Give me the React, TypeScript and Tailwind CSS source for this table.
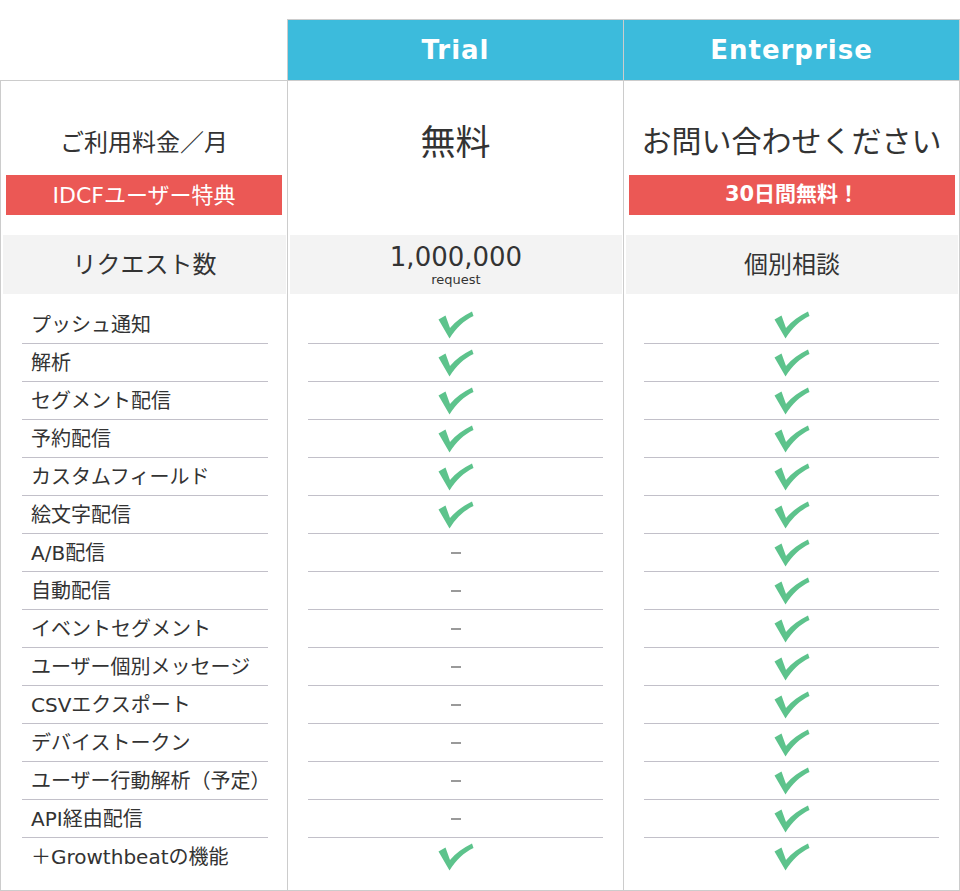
import React from "react";

const FONT = "font-['DejaVu_Sans','Noto_Sans_CJK_JP',sans-serif]";

const features: { name: string; trial: boolean }[] = [
  { name: "プッシュ通知", trial: true },
  { name: "解析", trial: true },
  { name: "セグメント配信", trial: true },
  { name: "予約配信", trial: true },
  { name: "カスタムフィールド", trial: true },
  { name: "絵文字配信", trial: true },
  { name: "A/B配信", trial: false },
  { name: "自動配信", trial: false },
  { name: "イベントセグメント", trial: false },
  { name: "ユーザー個別メッセージ", trial: false },
  { name: "CSVエクスポート", trial: false },
  { name: "デバイストークン", trial: false },
  { name: "ユーザー行動解析（予定）", trial: false },
  { name: "API経由配信", trial: false },
  { name: "＋Growthbeatの機能", trial: true },
];

function Check() {
  return (
    <svg width="36" height="28" viewBox="0 0 36 28" aria-hidden="true">
      <path
        d="M0.5 8.5 L7.5 4.5 L12 17 C18 10 25 5 34 0.5 L35.5 5 C26 9.5 18 17 11.5 27.5 Z"
        fill="#5dc38c"
      />
    </svg>
  );
}

function Dash() {
  return <div className="w-[10px] h-[2px] bg-[#9a9a9a]" />;
}

export default function App() {
  return (
    <div className={`w-[960px] bg-white text-[#333] ${FONT}`}>
      <div className="h-[19px]" />
      {/* header */}
      <div className="flex">
        <div className="w-[287px] h-[62px] border-b border-[#cccccc]" />
        <div className="w-[337px] h-[62px] border border-[#cccccc] bg-[#3cbbdc] flex items-center justify-center">
          <span className="text-white font-bold text-[26px] tracking-[1px] font-['DejaVu_Sans',sans-serif]">
            Trial
          </span>
        </div>
        <div className="w-[336px] h-[62px] border-t border-r border-b border-[#cccccc] bg-[#3cbbdc] flex items-center justify-center">
          <span className="text-white font-bold text-[26px] tracking-[1px] font-['DejaVu_Sans',sans-serif]">
            Enterprise
          </span>
        </div>
      </div>

      {/* body */}
      <div className="flex border-l border-r border-b border-[#cccccc]">
        {/* label column */}
        <div className="w-[287px] border-r border-[#cccccc] flex flex-col">
          <div className="h-[154px] flex flex-col pt-[45px]">
            <div className="text-center text-[24px] leading-[34px]">ご利用料金／月</div>
            <div className="mt-[15px] ml-[5px] mr-[5px] h-[40px] bg-[#eb5855] text-white text-[22px] flex items-center justify-center">
              IDCFユーザー特典
            </div>
          </div>
          <div className="h-[59px] ml-[2px] mr-[1px] bg-[#f3f3f3] flex items-center justify-center text-[24px]">
            リクエスト数
          </div>
          <div className="pt-[12px] pb-[15px] ml-[21px] mr-[19px] flex flex-col">
            {features.map((f, i) => (
              <div
                key={f.name}
                className={`h-[38px] last:h-[37px] flex items-center pl-[9px] text-[20px] ${
                  i < features.length - 1 ? "border-b border-[#c2c0c9]" : ""
                }`}
              >
                {f.name}
              </div>
            ))}
          </div>
        </div>

        {/* trial column */}
        <div className="w-[336px] border-r border-[#cccccc] flex flex-col">
          <div className="h-[154px] flex flex-col pt-[44px]">
            <div className="text-center text-[35px] leading-[36px]">無料</div>
          </div>
          <div className="h-[59px] ml-[2px] mr-[1px] bg-[#f3f3f3] flex flex-col items-center justify-center">
            <div className="text-[26px] leading-[30px]">1,000,000</div>
            <div className="text-[13px] leading-[15px]">request</div>
          </div>
          <div className="pt-[12px] pb-[15px] mx-[20px] flex flex-col">
            {features.map((f, i) => (
              <div
                key={f.name}
                className={`h-[38px] last:h-[37px] flex items-center justify-center ${
                  i < features.length - 1 ? "border-b border-[#c2c0c9]" : ""
                }`}
              >
                {f.trial ? <Check /> : <Dash />}
              </div>
            ))}
          </div>
        </div>

        {/* enterprise column */}
        <div className="w-[335px] flex flex-col">
          <div className="h-[154px] flex flex-col pt-[44px]">
            <div className="text-center text-[30px] leading-[34px]">お問い合わせください</div>
            <div className="mt-[16px] ml-[5px] mr-[4px] h-[40px] bg-[#eb5855] text-white text-[21px] font-bold flex items-center justify-center">
              30日間無料！
            </div>
          </div>
          <div className="h-[59px] ml-[2px] mr-[1px] bg-[#f3f3f3] flex items-center justify-center text-[24px]">
            個別相談
          </div>
          <div className="pt-[12px] pb-[15px] mx-[20px] flex flex-col">
            {features.map((f, i) => (
              <div
                key={f.name}
                className={`h-[38px] last:h-[37px] flex items-center justify-center ${
                  i < features.length - 1 ? "border-b border-[#c2c0c9]" : ""
                }`}
              >
                <Check />
              </div>
            ))}
          </div>
        </div>
      </div>
    </div>
  );
}
